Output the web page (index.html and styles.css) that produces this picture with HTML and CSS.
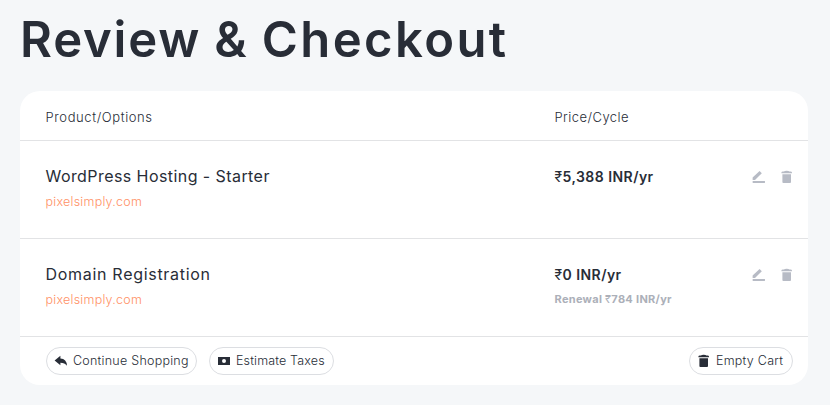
FILE: index.html
```html
<!DOCTYPE html>
<html lang="en">
<head>
<meta charset="UTF-8">
<title>Review &amp; Checkout</title>
<link rel="stylesheet" href="styles.css">
</head>
<body>
<!-- shared icons -->
<svg class="sprite">
    <symbol id="edit" viewBox="0 0 14 14">
        <path d="M0.6 9.9V7.6L7.6 1.1L9.8 3.2L3 9.9Z"/>
        <rect x="0.6" y="10.9" width="12.4" height="2.1" rx="0.4"/>
    </symbol>
    <symbol id="trash" viewBox="0 0 14 14">
        <path d="M1.4 3.3V2.5Q1.6 1.6 2.8 1.5L4 1.4Q4.5 0.8 6.7 0.8T9.4 1.4L10.6 1.5Q11.8 1.6 12 2.5V3.3Z"/>
        <path d="M2.4 4.3H11V12.1Q11 13 10.1 13H3.3Q2.4 13 2.4 12.1Z"/>
    </symbol>
</svg>
<h1 class="title">Review &amp; <span class="wide">Checkout</span></h1>
<div class="cart">
    <div class="row head">
        <div class="label product-label">Product/Options</div>
        <div class="label price-label">Price/Cycle</div>
    </div>
    <div class="row item">
        <div class="product">
            <div class="name hosting">WordPress Hosting - Starter</div>
            <a class="domain">pixelsimply.com</a>
        </div>
        <div class="cost">
            <div class="price"><span class="rupee">₹</span>5,388 INR/yr</div>
        </div>
        <div class="actions">
            <svg><use href="#edit"/></svg>
            <svg><use href="#trash"/></svg>
        </div>
    </div>
    <div class="row item">
        <div class="product">
            <div class="name registration">Domain Registration</div>
            <a class="domain">pixelsimply.com</a>
        </div>
        <div class="cost">
            <div class="price zero"><span class="rupee">₹</span>0 INR/yr</div>
            <div class="renewal">Renewal <span class="rupee">₹</span>784 INR/yr</div>
        </div>
        <div class="actions">
            <svg><use href="#edit"/></svg>
            <svg><use href="#trash"/></svg>
        </div>
    </div>
    <div class="footer">
        <button class="btn continue">
            <svg viewBox="0 0 14 14"><path d="M0.6 6.5L6.4 1.7V4.5Q12.6 4.7 13 11.8Q10.8 8.7 6.4 8.7V11.3Z"/></svg>
            <span>Continue Shopping</span>
        </button>
        <button class="btn taxes">
            <svg viewBox="0 0 14 14"><path fill-rule="evenodd" d="M1 3H13V11H1ZM7 5A2 2 0 1 0 7 9A2 2 0 1 0 7 5Z"/></svg>
            <span>Estimate Taxes</span>
        </button>
        <button class="btn empty">
            <svg><use href="#trash"/></svg>
            <span>Empty Cart</span>
        </button>
    </div>
</div>
</body>
</html>
```

FILE: styles.css
```css
body {
    margin: 0;
    padding: 0 22px 0 20px;
    background-color: #f5f7f9;
    color: #282d37;
    font-family: Inter, "Noto Sans", sans-serif;
}

.sprite {
    display: none;
}

.title {
    margin: 0;
    height: 80px;
    padding-bottom: 11px;
    font-size: 49px;
    font-weight: 600;
    line-height: 80px;
    letter-spacing: 1.8px;
    word-spacing: -1px;
    white-space: nowrap;
}

.wide {
    letter-spacing: 2.4px;
}

.cart {
    height: 294px;
    border-radius: 20px;
    background-color: #fff;
}

.row {
    box-sizing: border-box;
    display: grid;
    grid-template-columns: 509px 1fr 56px;
    padding: 0 0 0 25.5px;
    border-bottom: 1px solid #e2e3e5;
}

.head {
    height: 50px;
    padding-top: 16px;
}

.label {
    font-size: 13px;
    font-weight: 300;
    line-height: 20px;
    letter-spacing: 0.6px;
}

.price-label {
    letter-spacing: 0.45px;
}

.item {
    height: 98px;
    padding-top: 23px;
}

.name {
    font-size: 16px;
    line-height: 24px;
}

.hosting {
    letter-spacing: 0.43px;
}

.registration {
    letter-spacing: 0.7px;
}

.domain {
    display: block;
    margin-top: 4px;
    color: #ff9166;
    font-size: 12.5px;
    font-weight: 300;
    line-height: 20px;
    letter-spacing: 0.24px;
}

.price {
    font-size: 14px;
    font-weight: 600;
    line-height: 26px;
    letter-spacing: 0.45px;
}

.rupee {
    font-weight: 400;
}

.renewal {
    color: #acb0b9;
    font-size: 11px;
    font-weight: 700;
    line-height: 22px;
    letter-spacing: 0.3px;
}

.actions {
    display: flex;
    gap: 14px;
    padding-top: 6px;
}

svg {
    width: 14px;
    height: 14px;
    fill: currentColor;
}

.actions svg {
    color: #b7bbc5;
}

.footer {
    display: flex;
    gap: 12px;
    padding: 10px 15px 0 26px;
}

.btn {
    box-sizing: border-box;
    display: flex;
    align-items: center;
    gap: 5px;
    height: 28px;
    padding: 0 7px 1px;
    border: 1px solid #dcdee2;
    border-radius: 14px;
    background-color: #fff;
    color: #282d37;
    font-family: inherit;
    font-size: 12.5px;
    font-weight: 300;
    letter-spacing: 0.25px;
    white-space: nowrap;
}

.continue {
    width: 151px;
}

.taxes {
    width: 125px;
    letter-spacing: 0.15px;
}

.empty {
    width: 104px;
    margin-left: auto;
}
```
